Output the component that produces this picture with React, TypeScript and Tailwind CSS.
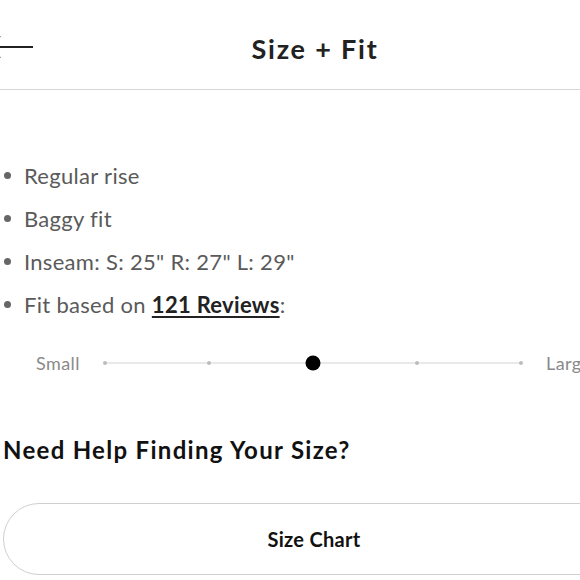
import React from "react";

const font = { fontFamily: "Lato, 'Noto Sans', sans-serif" };

export default function App() {
  const items = ["Regular rise", "Baggy fit", 'Inseam: S: 25" R: 27" L: 29"'];
  return (
    <div className="w-[580px] h-[580px] overflow-hidden bg-white" style={font}>
      <div className="w-[652px] ml-[-12px]">
        <header className="grid grid-cols-[1fr_auto_1fr] items-center h-[90px] pt-[10px] border-b border-[#d6d6d6]">
          <div className="flex items-center mt-[-6px]">
            <svg width="46" height="26" viewBox="0 0 46 26" fill="none" stroke="#222" strokeWidth="2">
              <path d="M1 13 H45 M12 2 L1 13 L12 24" />
            </svg>
          </div>
          <h1 className="text-[27px] font-bold text-[#222] tracking-[1.8px] mr-[-2px]">Size + Fit</h1>
          <div />
        </header>

        <main className="px-[15px] pt-[64px]">
          <ul className="flex flex-col">
            {items.map((t) => (
              <li key={t} className="flex items-center h-[43px] text-[22px] tracking-[0.3px] text-[#5a5a5a]">
                <span className="w-[7px] h-[7px] rounded-full bg-[#666] ml-[1px] mr-[13px]" />
                {t}
              </li>
            ))}
            <li className="flex items-center h-[43px] text-[22px] tracking-[0.3px] text-[#5a5a5a]">
              <span className="w-[7px] h-[7px] rounded-full bg-[#666] ml-[1px] mr-[13px]" />
              Fit based on&nbsp;
              <span className="font-bold text-[#222] underline underline-offset-[3px] decoration-[2px]">121 Reviews</span>:
            </li>
          </ul>

          <div className="flex items-center h-[24px] mt-[25px] pl-[33px]">
            <span className="text-[18px] tracking-[0.4px] text-[#8a8a8a] w-[45px]">Small</span>
            <div className="relative w-[416px] h-[2px] bg-[#e9e9e9] ml-[24px] mr-[25px]">
              {[0, 25, 50, 75, 100].map((p) => (
                <span
                  key={p}
                  className="absolute top-1/2 w-[4px] h-[4px] rounded-full bg-[#bdbdbd] -translate-x-1/2 -translate-y-1/2"
                  style={{ left: `${p}%` }}
                />
              ))}
              <span className="absolute left-1/2 top-1/2 w-[15px] h-[15px] rounded-full bg-black -translate-x-1/2 -translate-y-1/2" />
            </div>
            <span className="text-[18px] tracking-[0.4px] text-[#8a8a8a]">Large</span>
          </div>

          <h2 className="mt-[60px] text-[24px] font-bold text-[#111] leading-[30px] tracking-[1.3px]">Need Help Finding Your Size?</h2>

          <button className="mt-[38px] w-full h-[72px] rounded-full border-[1.5px] border-[#cfcfcf] bg-white text-[20px] tracking-[0.3px] font-bold text-[#111]">
            Size Chart
          </button>
        </main>
      </div>
    </div>
  );
}
